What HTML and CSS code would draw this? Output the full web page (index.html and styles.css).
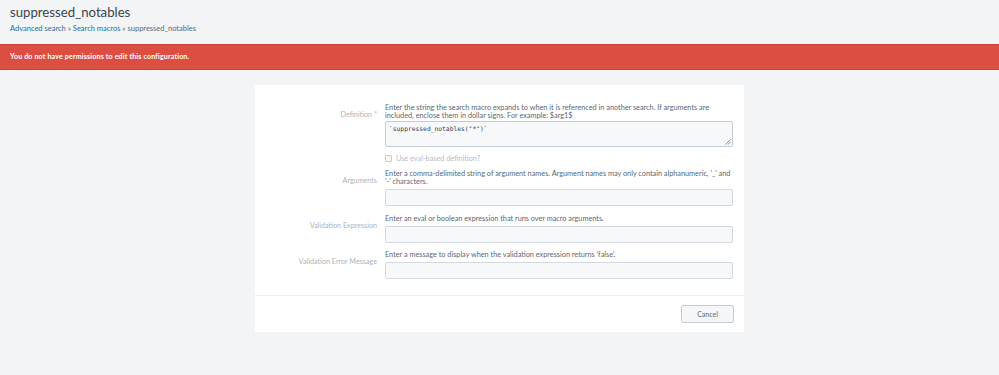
FILE: index.html
```html
<!DOCTYPE html>
<html lang="en">
<head>
<meta charset="utf-8">
<title>suppressed_notables</title>
<link rel="stylesheet" href="styles.css">
</head>
<body>
<header class="page-header">
  <h1 class="title">suppressed_notables</h1>
  <nav class="crumbs">
    <a href="#" class="crumb-link">Advanced search</a>
    <span class="sep">»</span>
    <a href="#" class="crumb-link">Search macros</a>
    <span class="sep">»</span>
    <span class="crumb-current">suppressed_notables</span>
  </nav>
</header>
<div class="alert">You do not have permissions to edit this configuration.</div>
<main class="main">
  <section class="card">
    <div class="form">
      <div class="row row-def">
        <label class="label">Definition <span class="req">*</span></label>
        <div class="control">
          <p class="help">Enter the string the search macro expands to when it is referenced in another search. If arguments are included, enclose them in dollar signs. For example: $arg1$</p>
          <div class="textarea"><span class="code">`suppressed_notables("*")`</span><svg class="grip" width="6" height="6" viewBox="0 0 6 6"><path d="M5.5 0.5 L0.5 5.5 M5.5 3 L3 5.5" stroke="#6b747d" stroke-width="0.8" fill="none"/></svg></div>
          <div class="check"><span class="box"></span><span class="check-text">Use eval-based definition?</span></div>
        </div>
      </div>
      <div class="row row-args">
        <label class="label">Arguments</label>
        <div class="control">
          <p class="help">Enter a comma-delimited string of argument names. Argument names may only contain alphanumeric, '_' and '-' characters.</p>
          <div class="input"></div>
        </div>
      </div>
      <div class="row row-val">
        <label class="label">Validation Expression</label>
        <div class="control">
          <p class="help">Enter an eval or boolean expression that runs over macro arguments.</p>
          <div class="input"></div>
        </div>
      </div>
      <div class="row row-err">
        <label class="label">Validation Error Message</label>
        <div class="control">
          <p class="help">Enter a message to display when the validation expression returns 'false'.</p>
          <div class="input"></div>
        </div>
      </div>
    </div>
    <div class="footer">
      <button class="btn" type="button">Cancel</button>
    </div>
  </section>
</main>
</body>
</html>
```
FILE: styles.css
```css
* { box-sizing: border-box; }
html, body { margin: 0; padding: 0; }
body {
  background: #f2f4f5;
  font-family: Lato, "Open Sans", "Liberation Sans", sans-serif;
  color: #3c444d;
  width: 999px;
  height: 375px;
  overflow: hidden;
}
.page-header {
  padding: 4px 10px 0;
  height: 44px;
}
.title {
  margin: 0;
  font-size: 13.2px;
  font-weight: 400;
  line-height: 16px;
  color: #3c444d;
}
.crumbs {
  margin-top: 4px;
  font-size: 7.5px;
  line-height: 10px;
  color: #5c6773;
}
.crumb-link { color: #2d6b9e; text-decoration: none; }
.sep { color: #5c6773; }
.alert {
  background: #dc4e41;
  border-top: 1px solid #c8433a;
  border-bottom: 1px solid #c8433a;
  height: 26px;
  color: #ffffff;
  font-weight: 700;
  font-size: 7.1px;
  letter-spacing: 0.15px;
  line-height: 24px;
  padding: 0 10px;
}
.main {
  padding-top: 15px;
  display: flex;
  justify-content: center;
}
.card {
  width: 489px;
  background: #ffffff;
}
.form {
  padding: 19px 11px 16px 0;
  display: flex;
  flex-direction: column;
  gap: 9px;
}
.row {
  display: grid;
  grid-template-columns: 122px 348px;
  column-gap: 8px;
}
.label {
  text-align: right;
  font-size: 7.2px;
  line-height: 8px;
  color: #adb4bb;
  padding-top: 7px;
}
.req { color: #adb4bb; }
.help {
  margin: 0 0 3px;
  font-size: 7.3px;
  line-height: 8px;
  color: #5c6773;
}
.textarea {
  position: relative;
  height: 26px;
  border: 1px solid #c3cbd4;
  border-radius: 2px;
  background: #f7f8fa;
  padding: 3px 3px;
  margin-top: -2px;
  font-size: 6.3px;
  line-height: 8px;
}
.code {
  font-family: "DejaVu Sans Mono", "Liberation Mono", monospace;
  font-size: 6.3px;
  line-height: 8px;
  color: #3c444d;
}
.grip { position: absolute; right: 1px; bottom: 1px; }
.check {
  display: flex;
  align-items: center;
  gap: 4px;
  margin-top: 6px;
  height: 10px;
}
.box {
  width: 7px;
  height: 7px;
  border: 1px solid #c3cbd4;
  border-radius: 1px;
  background: #f7f8fa;
}
.check-text {
  font-size: 7.3px;
  color: #b5bcc3;
}
.row-args { margin-top: -2px; }
.input {
  height: 17px;
  border: 1px solid #d4d9df;
  border-radius: 2px;
  background: #f7f8fa;
}
.row-args .input { margin-top: 3px; }
.row-val .input { margin-top: 2px; }
.row-err { margin-top: -1px; }
.row-err .input { margin-top: 2px; }
.footer {
  border-top: 1px solid #eceef0;
  display: flex;
  justify-content: flex-end;
  padding: 9px 10px 9px;
}
.btn {
  width: 53px;
  height: 18px;
  border: 1px solid #c3cbd4;
  border-radius: 2px;
  background: #f5f6f8;
  font-family: Lato, "Open Sans", "Liberation Sans", sans-serif;
  font-size: 7px;
  color: #5c6773;
  padding: 0;
}
```
